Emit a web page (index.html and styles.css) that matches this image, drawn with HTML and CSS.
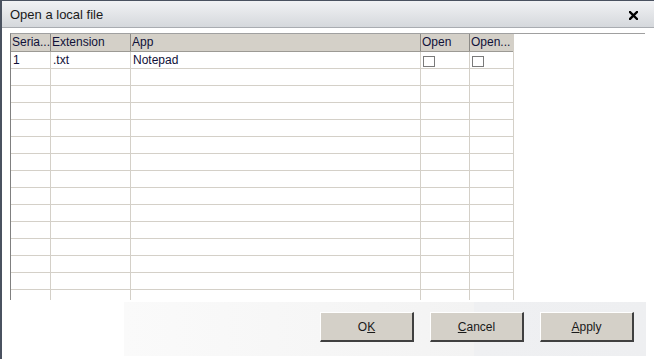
FILE: index.html
```html
<!DOCTYPE html>
<html lang="en">
<head>
    <meta charset="UTF-8">
    <title>Open a local file</title>
    <link rel="stylesheet" href="styles.css">
</head>
<body>
    <div class="window">
        <div class="titlebar">
            <span class="title">Open a local file</span>
            <svg class="close" width="9" height="9" viewBox="0 0 9 9">
                <path d="M1 1 L8 8 M8 1 L1 8" stroke="#000" stroke-width="2.4" stroke-linecap="square"/>
            </svg>
        </div>

        <div class="content">
            <div class="pane">
                <div class="grid">
                    <div class="row head">
                        <div class="cell">Seria...</div>
                        <div class="cell">Extension</div>
                        <div class="cell">App</div>
                        <div class="cell">Open</div>
                        <div class="cell">Open...</div>
                    </div>
                    <div class="row">
                        <div class="cell">1</div>
                        <div class="cell">.txt</div>
                        <div class="cell">Notepad</div>
                        <div class="cell"><span class="check"></span></div>
                        <div class="cell"><span class="check"></span></div>
                    </div>
                    <div class="row"><div class="cell"></div><div class="cell"></div><div class="cell"></div><div class="cell"></div><div class="cell"></div></div>
                    <div class="row"><div class="cell"></div><div class="cell"></div><div class="cell"></div><div class="cell"></div><div class="cell"></div></div>
                    <div class="row"><div class="cell"></div><div class="cell"></div><div class="cell"></div><div class="cell"></div><div class="cell"></div></div>
                    <div class="row"><div class="cell"></div><div class="cell"></div><div class="cell"></div><div class="cell"></div><div class="cell"></div></div>
                    <div class="row"><div class="cell"></div><div class="cell"></div><div class="cell"></div><div class="cell"></div><div class="cell"></div></div>
                    <div class="row"><div class="cell"></div><div class="cell"></div><div class="cell"></div><div class="cell"></div><div class="cell"></div></div>
                    <div class="row"><div class="cell"></div><div class="cell"></div><div class="cell"></div><div class="cell"></div><div class="cell"></div></div>
                    <div class="row"><div class="cell"></div><div class="cell"></div><div class="cell"></div><div class="cell"></div><div class="cell"></div></div>
                    <div class="row"><div class="cell"></div><div class="cell"></div><div class="cell"></div><div class="cell"></div><div class="cell"></div></div>
                    <div class="row"><div class="cell"></div><div class="cell"></div><div class="cell"></div><div class="cell"></div><div class="cell"></div></div>
                    <div class="row"><div class="cell"></div><div class="cell"></div><div class="cell"></div><div class="cell"></div><div class="cell"></div></div>
                    <div class="row"><div class="cell"></div><div class="cell"></div><div class="cell"></div><div class="cell"></div><div class="cell"></div></div>
                    <div class="row"><div class="cell"></div><div class="cell"></div><div class="cell"></div><div class="cell"></div><div class="cell"></div></div>
                    <div class="row"><div class="cell"></div><div class="cell"></div><div class="cell"></div><div class="cell"></div><div class="cell"></div></div>
                </div>
            </div>

            <!-- dialog buttons -->
            <div class="buttons">
                <button class="btn">O<u>K</u></button>
                <button class="btn"><u>C</u>ancel</button>
                <button class="btn"><u>A</u>pply</button>
            </div>
        </div>
    </div>
</body>
</html>
```

FILE: styles.css
```css
* {
    box-sizing: border-box;
}

body {
    margin: 0;
    font-family: "Liberation Sans", Arial, sans-serif;
    font-size: 12px;
    background-color: white;
}

.window {
    width: 654px;
    height: 359px;
    border-left: 2px solid #4a5260;
    border-top: 1px solid #4a5260;
    background-color: white;
    overflow: hidden;
}

.titlebar {
    height: 27px;
    display: flex;
    align-items: center;
    padding: 0 16px 0 8px;
    background: linear-gradient(#f1f2f4, #d5d8dc);
    border-bottom: 1px solid #a9acb1;
}

.title {
    flex: 1;
    font-size: 13px;
    color: #1a1a1a;
}

.close {
    margin-top: 2px;
}

.content {
    padding-top: 5px;
}

.pane {
    margin-left: 8px;
    width: 635px;
    height: 267px;
    border-top: 1px solid #a0a0a0;
    border-left: 1px solid #808080;
    overflow: hidden;
}

.grid {
    width: 503px;
    border-right: 1px solid #d4d0c8;
}

.row {
    display: grid;
    grid-template-columns: 40px 80px 290px 49px 43px;
    height: 17px;
    border-bottom: 1px solid #d4d0c8;
}

.cell {
    border-right: 1px solid #d4d0c8;
    padding-left: 2px;
    line-height: 16px;
    color: #101038;
    white-space: nowrap;
    overflow: hidden;
}

.cell:last-child {
    border-right: none;
}

.row.head {
    height: 18px;
    background-color: #d4d0c8;
    border-bottom: 1px solid #9c9a94;
}

.head .cell {
    border-right: 1px solid #8c8a86;
    line-height: 17px;
    padding-left: 1px;
}

.head .cell:last-child {
    border-right: none;
}

.check {
    display: inline-block;
    width: 12px;
    height: 11px;
    margin-top: 4px;
    border: 1px solid #7a7a7a;
    background-color: white;
}

.buttons {
    margin: 2px 0 0 122px;
    width: 522px;
    height: 54px;
    display: flex;
    justify-content: flex-end;
    gap: 16px;
    padding: 10px 12px 0 0;
    background: linear-gradient(to right, #fafafa 0%, #f3f3f3 67%, #eff0f2 67%, #eeeff1 100%);
}

.btn {
    width: 94px;
    height: 30px;
    font-family: "Liberation Sans", Arial, sans-serif;
    font-size: 12px;
    color: #1a1a1a;
    background-color: #d4d0c8;
    border-top: 1px solid white;
    border-left: 1px solid white;
    border-right: 2px solid #404040;
    border-bottom: 2px solid #404040;
    padding: 0;
}
```
